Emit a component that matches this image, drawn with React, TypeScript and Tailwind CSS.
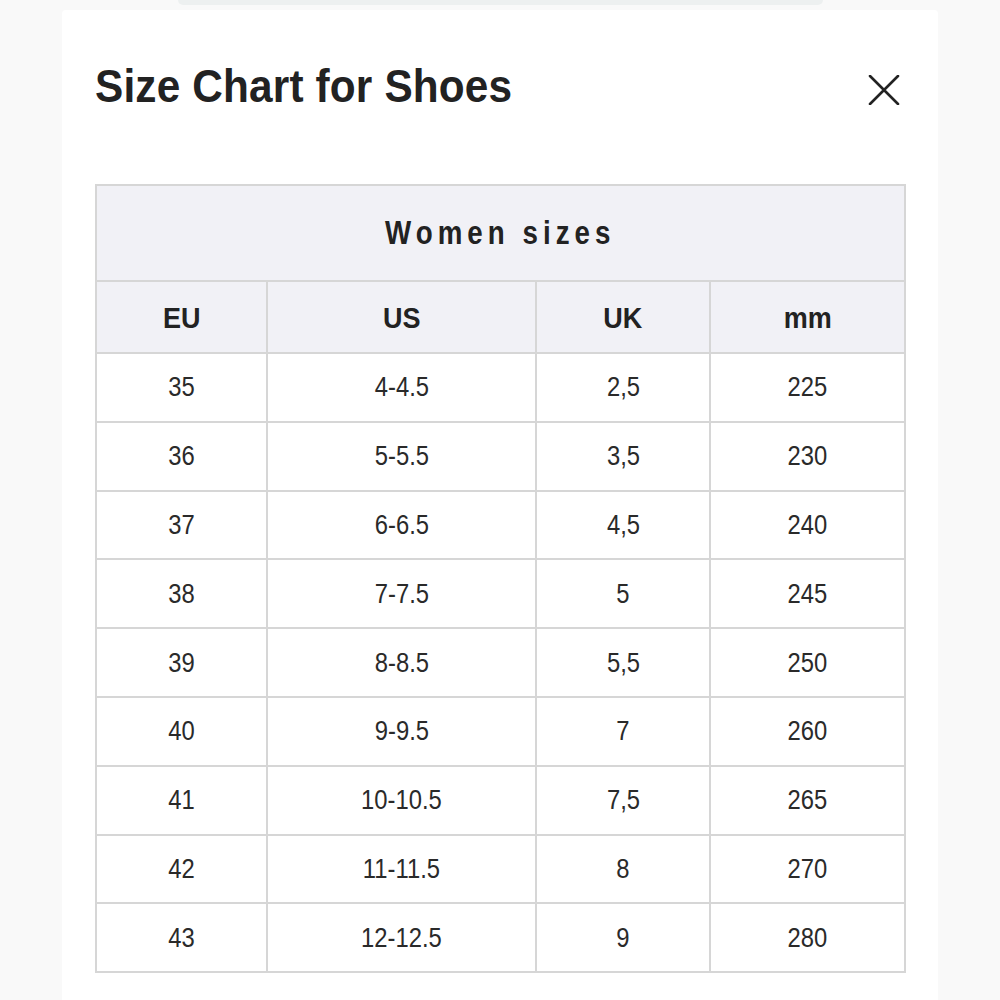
const rows = [
  ["35", "4-4.5", "2,5", "225"],
  ["36", "5-5.5", "3,5", "230"],
  ["37", "6-6.5", "4,5", "240"],
  ["38", "7-7.5", "5", "245"],
  ["39", "8-8.5", "5,5", "250"],
  ["40", "9-9.5", "7", "260"],
  ["41", "10-10.5", "7,5", "265"],
  ["42", "11-11.5", "8", "270"],
  ["43", "12-12.5", "9", "280"],
];

const headers = ["EU", "US", "UK", "mm"];

export default function App() {
  return (
    <div className="h-[1000px] overflow-hidden bg-[#f9f9f9] font-['Liberation_Sans',Arial,sans-serif]">
      <div className="mx-auto h-[5px] w-[645px] rounded-b-full bg-[#edf0f0]" />
      <div className="mx-[62px] mt-[5px] h-[1000px] rounded-t-[4px] bg-white pl-[33px] pr-[30px] pt-[49px]">
        <div className="flex items-center justify-between">
          <h1 className="origin-left scale-x-[0.9] text-[47px] font-bold leading-[54px] tracking-[0.2px] text-[#222]">
            Size Chart for Shoes
          </h1>
          <button className="mr-[8px] mt-[7px] text-[#222]">
            <svg width="32" height="30" viewBox="0 0 32 30" fill="none">
              <path
                d="M2 1L30 29M30 1L2 29"
                stroke="currentColor"
                strokeWidth="2.6"
                strokeLinecap="round"
              />
            </svg>
          </button>
        </div>

        <div className="mt-[71px] w-[811px] border-l-2 border-t-2 border-[#d6d6d6] text-[#222]">
          <div className="flex h-[96px] items-center justify-center border-b-2 border-r-2 border-[#d6d6d6] bg-[#f1f1f6] pb-[1px]">
            <span className="inline-block scale-x-[0.84] text-[33px] font-bold tracking-[6px]">
              Women sizes
            </span>
          </div>
          <div className="grid grid-cols-[171px_269px_174px_195px]">
            {headers.map((h) => (
              <div
                key={h}
                className="flex h-[72px] items-center justify-center border-b-2 border-r-2 border-[#d6d6d6] bg-[#f1f1f6]"
              >
                <span className="inline-block scale-x-[0.9] text-[30px] font-bold">
                  {h}
                </span>
              </div>
            ))}
            {rows.map((row, idx) =>
              row.map((cell, j) => (
                <div
                  key={idx + "-" + j}
                  className="flex h-[68.8px] items-center justify-center border-b-2 border-r-2 border-[#d6d6d6] text-[#2a2a2a]"
                >
                  <span className="inline-block scale-x-[0.85] text-[28px]">
                    {cell}
                  </span>
                </div>
              ))
            )}
          </div>
        </div>
      </div>
    </div>
  );
}
